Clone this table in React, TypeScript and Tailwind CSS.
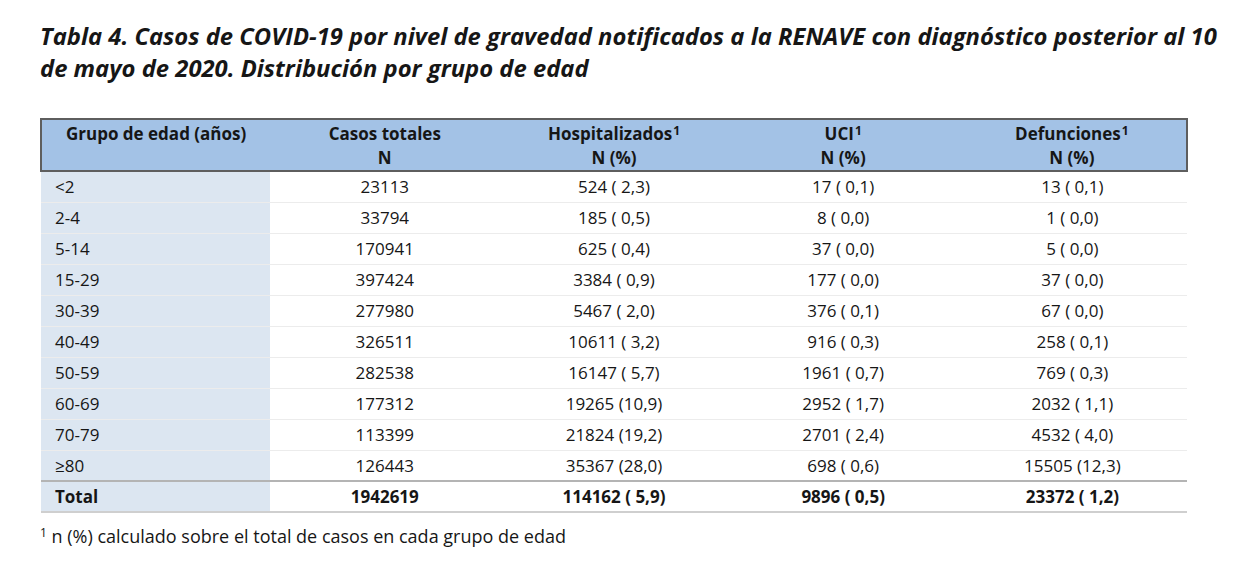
import React from 'react';

const rows: [string, string, string, string, string][] = [
  ['<2', '23113', '524 ( 2,3)', '17 ( 0,1)', '13 ( 0,1)'],
  ['2-4', '33794', '185 ( 0,5)', '8 ( 0,0)', '1 ( 0,0)'],
  ['5-14', '170941', '625 ( 0,4)', '37 ( 0,0)', '5 ( 0,0)'],
  ['15-29', '397424', '3384 ( 0,9)', '177 ( 0,0)', '37 ( 0,0)'],
  ['30-39', '277980', '5467 ( 2,0)', '376 ( 0,1)', '67 ( 0,0)'],
  ['40-49', '326511', '10611 ( 3,2)', '916 ( 0,3)', '258 ( 0,1)'],
  ['50-59', '282538', '16147 ( 5,7)', '1961 ( 0,7)', '769 ( 0,3)'],
  ['60-69', '177312', '19265 (10,9)', '2952 ( 1,7)', '2032 ( 1,1)'],
  ['70-79', '113399', '21824 (19,2)', '2701 ( 2,4)', '4532 ( 4,0)'],
  ['≥80', '126443', '35367 (28,0)', '698 ( 0,6)', '15505 (12,3)'],
];

const headers = [
  { top: 'Grupo de edad (años)', sup: false, sub: '' },
  { top: 'Casos totales', sup: false, sub: 'N' },
  { top: 'Hospitalizados', sup: true, sub: 'N (%)' },
  { top: 'UCI', sup: true, sub: 'N (%)' },
  { top: 'Defunciones', sup: true, sub: 'N (%)' },
];

export default function App() {
  return (
    <div className="w-[1242px] h-[571px] bg-white text-[#161616] font-['Open_Sans',sans-serif] pt-[20px] px-[40px]">
      {/* Title */}
      <h1 className="text-[23.8px] font-bold italic leading-[32px] whitespace-nowrap">
        Tabla 4. Casos de COVID-19 por nivel de gravedad notificados a la RENAVE con diagnóstico posterior al 10
        <br />
        de mayo de 2020. Distribución por grupo de edad
      </h1>

      <table className="mt-[34px] w-[1148px] table-fixed border-collapse text-[17px]">
        <thead>
          <tr className="bg-[#a3c2e6] border-2 border-[#5e5e5e] h-[52px]">
            {headers.map((h, i) => (
              <th key={i} className="font-bold align-top pt-[2px] leading-[24px] text-center">
                <div>
                  {h.top}
                  {h.sup && <span className="text-[12px] leading-none relative -top-[5px] ml-[1px]">1</span>}
                </div>
                <div>{h.sub}</div>
              </th>
            ))}
          </tr>
        </thead>
        <tbody>
          {rows.map((r) => (
            <tr key={r[0]} className="h-[31px] border-b border-[#ececec]">
              <td className="bg-[#dce6f1] pl-[14px] text-left">{r[0]}</td>
              {r.slice(1).map((c, j) => (
                <td key={j} className="text-center whitespace-pre">{c}</td>
              ))}
            </tr>
          ))}
          <tr className="h-[31px] border-t-2 border-t-[#b4b4b4] border-b-2 border-b-[#cfcfcf] font-bold">
            <td className="bg-[#dce6f1] pl-[14px] text-left">Total</td>
            <td className="text-center">1942619</td>
            <td className="text-center whitespace-pre">114162 ( 5,9)</td>
            <td className="text-center whitespace-pre">9896 ( 0,5)</td>
            <td className="text-center whitespace-pre">23372 ( 1,2)</td>
          </tr>
        </tbody>
      </table>

      <p className="mt-[11px] text-[18px] leading-[24px]">
        <span className="text-[12px] leading-none relative -top-[6px]">1</span> n (%) calculado sobre el total de casos en cada grupo de edad
      </p>
    </div>
  );
}
